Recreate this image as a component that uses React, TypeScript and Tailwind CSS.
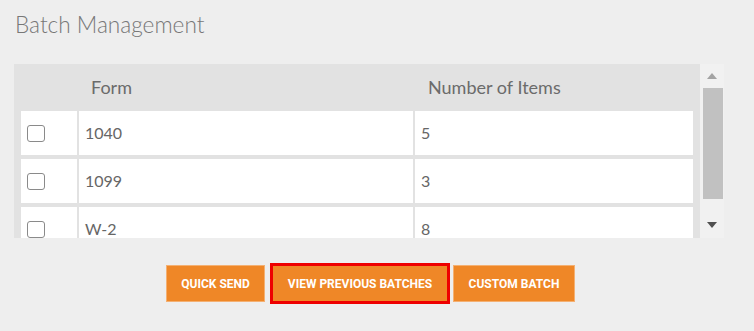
export default function App() {
  const rows = [
    ["1040", "5"],
    ["1099", "3"],
    ["W-2", "8"],
  ];
  return (
    <div className="w-[754px] h-[331px] bg-[#eeeeee] overflow-hidden font-['Lato',sans-serif]">
      <div className="pt-[11px] pl-[15px] h-[64px]">
        <h1 className="text-[22.6px] leading-[28px] font-light text-[#777777]">Batch Management</h1>
      </div>
      <div className="ml-[14px] w-[710px] h-[174px] flex">
        <div className="w-[686px] h-full overflow-hidden bg-[#e2e2e2] px-[7px]">
          <div className="grid grid-cols-[56px_334px_278px] gap-x-[2px] h-[47px] items-center text-[18px] text-[#6b6b6b]">
            <div />
            <div className="pl-[12px]">Form</div>
            <div className="pl-[13px]">Number of Items</div>
          </div>
          <div className="flex flex-col gap-y-[4px]">
            {rows.map(([form, n]) => (
              <div key={form} className="grid grid-cols-[56px_334px_278px] gap-x-[2px] h-[44px] text-[16px] text-[#666666]">
                <div className="bg-white flex items-center pl-[6px]">
                  <div className="w-[18px] h-[17px] rounded-[3px] border-[1.5px] border-[#8a8a8a] bg-white" />
                </div>
                <div className="bg-white flex items-center pl-[6px]">{form}</div>
                <div className="bg-white flex items-center pl-[6px]">{n}</div>
              </div>
            ))}
          </div>
        </div>
        <div className="w-[24px] h-full bg-[#f1f1f1] flex flex-col">
          <div className="h-[24px] flex items-center justify-center">
            <svg width="10" height="6" viewBox="0 0 10 6">
              <polygon points="5,0 10,6 0,6" fill="#a3a3a3" />
            </svg>
          </div>
          <div className="ml-[3px] w-[20px] h-[111px] bg-[#c1c1c1]" />
          <div className="flex-1 flex items-end justify-center pb-[10px]">
            <svg width="10" height="6" viewBox="0 0 10 6">
              <polygon points="0,0 10,0 5,6" fill="#505050" />
            </svg>
          </div>
        </div>
      </div>
      <div className="mt-[25px] pl-[166px] flex items-center h-[41px]">
        <button className="w-[99px] h-[37px] bg-[#ef8727] border border-[#f4b072] flex items-center justify-center font-['Roboto',sans-serif] font-bold text-[12px] text-white uppercase">
          Quick Send
        </button>
        <button className="ml-[5px] w-[180px] h-[41px] bg-[#ef8727] border-[3px] border-[#ee0000] flex items-center justify-center font-['Roboto',sans-serif] font-bold text-[12px] text-white uppercase">
          View Previous Batches
        </button>
        <button className="ml-[3px] w-[122px] h-[37px] bg-[#ef8727] border border-[#f4b072] flex items-center justify-center font-['Roboto',sans-serif] font-bold text-[12px] text-white uppercase">
          Custom Batch
        </button>
      </div>
    </div>
  );
}
